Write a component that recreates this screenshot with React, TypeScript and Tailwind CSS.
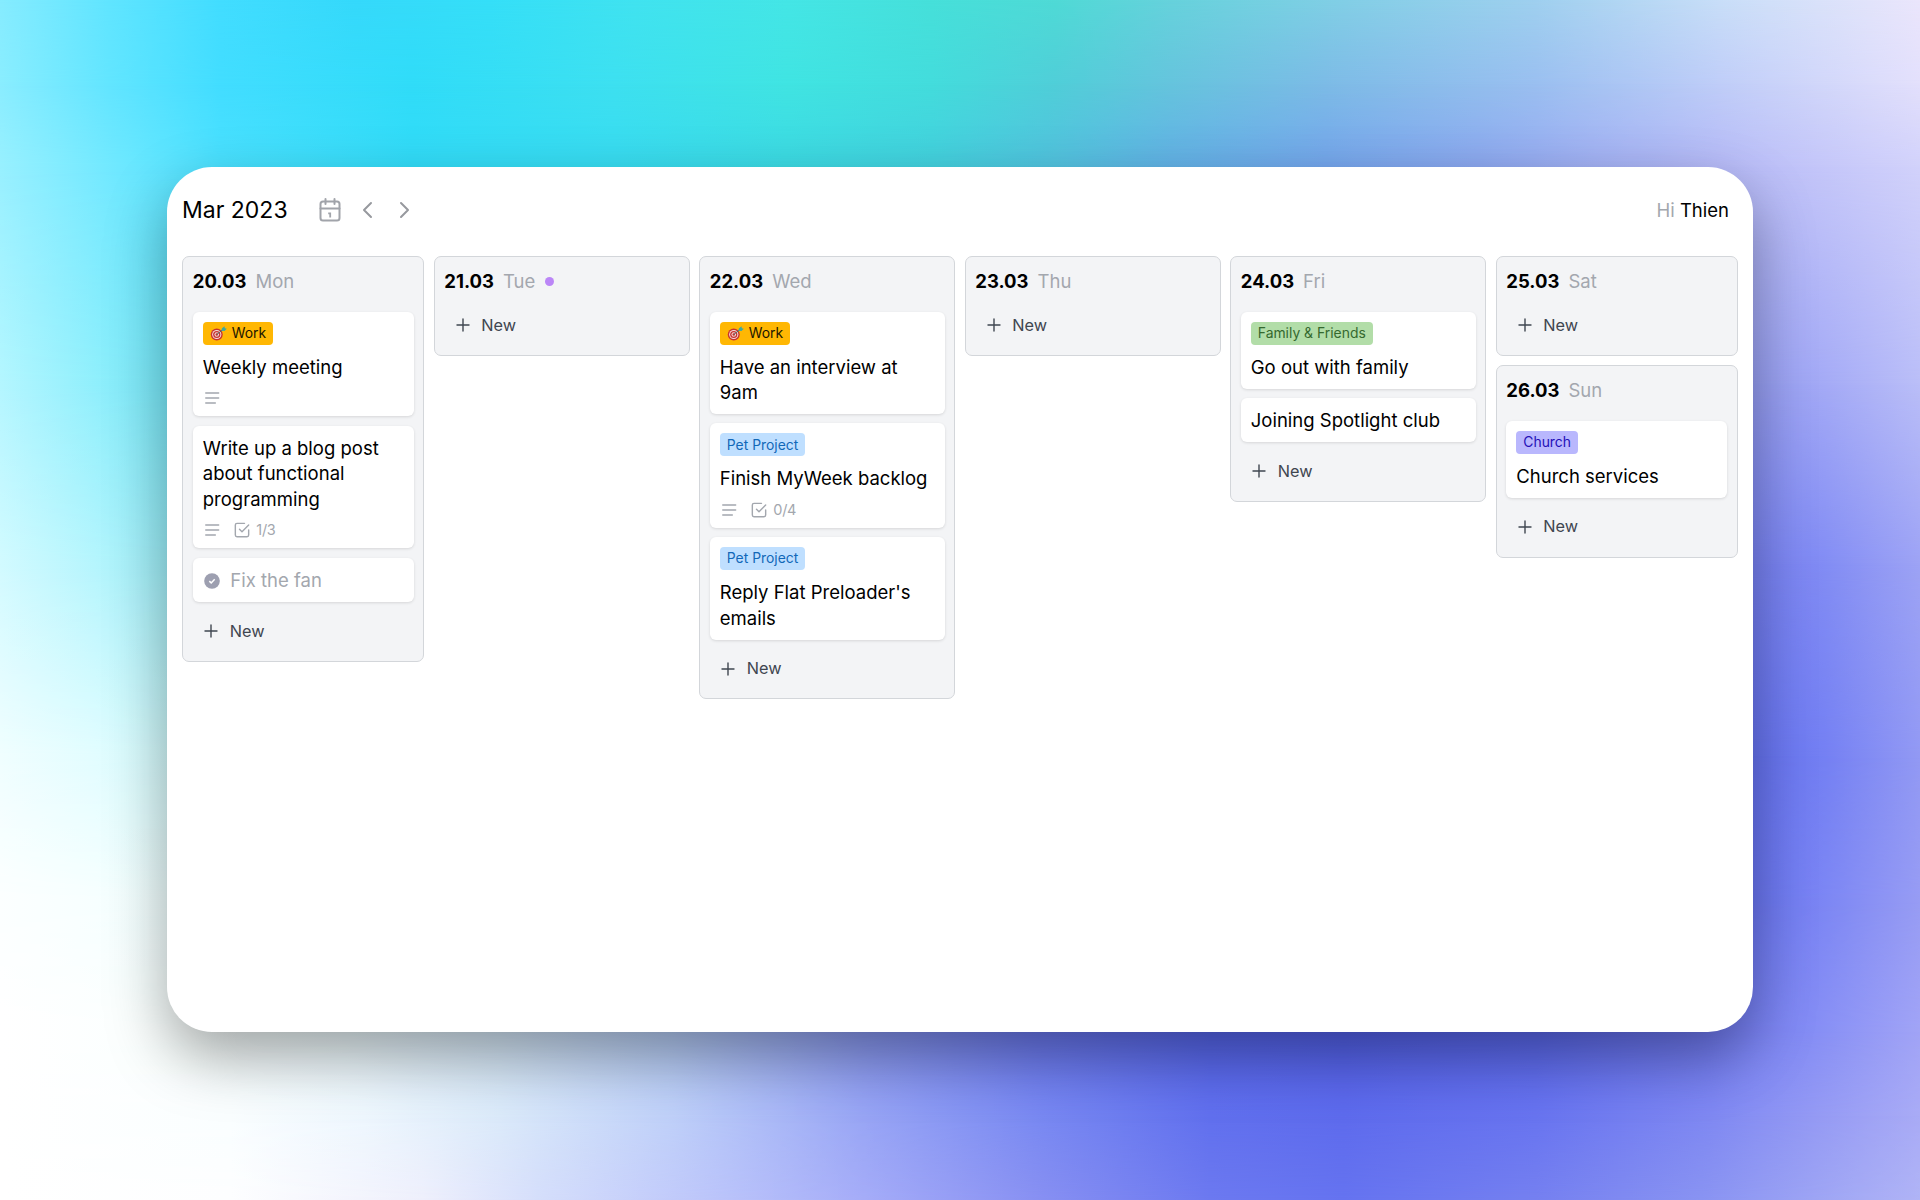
import type { ReactNode } from "react";

type Stop = [number, string];

/* Backdrop: horizontal gradients, each fading into the next from top to bottom. */
const bands: { y: number; stops: Stop[] }[] = [
  { y: 0, stops: [[0, "#86ecff"], [5.7, "#60e5ff"], [11.5, "#42ddff"], [18.5, "#35d9fb"], [25.5, "#35dff8"], [33, "#40e3f0"], [41, "#44e6e6"], [48.5, "#46e0da"], [55, "#4fdad6"], [61, "#66d2dc"], [70, "#82cfe6"], [80, "#9fd0ef"], [89.5, "#c8def8"], [100, "#ebe6fc"]] },
  { y: 7, stops: [[0, "#8aedff"], [5.7, "#62e5ff"], [11.5, "#42ddff"], [21.5, "#30dcf8"], [32, "#3de0f0"], [41, "#40e4e2"], [48.5, "#43dcdc"], [55, "#50ced8"], [61, "#65c4dd"], [69, "#7cbbe6"], [80, "#9abff0"], [89.5, "#bfcdf8"], [100, "#e3e0fc"]] },
  { y: 13.8, stops: [[0, "#98f0ff"], [11.5, "#4ae1ff"], [21.5, "#32dcf8"], [32, "#38dcf1"], [41, "#3cdae3"], [48.5, "#43d1de"], [55, "#52c2df"], [61, "#62b1e6"], [69, "#74a6ec"], [77, "#8ca8f0"], [83, "#a2b0f4"], [89.5, "#b6baf7"], [100, "#d2d2fb"]] },
  { y: 32, stops: [[0, "#b4f6ff"], [5, "#90effc"], [9, "#74e7f8"], [50, "#58aee8"], [91, "#959df3"], [95, "#a4aaf6"], [100, "#babef8"]] },
  { y: 47, stops: [[0, "#d2faff"], [5, "#b5f5fd"], [9, "#9ceef8"], [50, "#80a0f0"], [91, "#7680f2"], [95, "#828cf4"], [100, "#9da3f5"]] },
  { y: 63, stops: [[0, "#f0feff"], [5, "#e2fdff"], [9, "#d2fafc"], [50, "#8090f0"], [91, "#6471f0"], [95, "#7480f3"], [100, "#9299f4"]] },
  { y: 75, stops: [[0, "#fcffff"], [5, "#f7ffff"], [9, "#effefe"], [50, "#8090f0"], [91, "#6874f1"], [95, "#7c86f4"], [100, "#979cf4"]] },
  { y: 86, stops: [[0, "#ffffff"], [10, "#fafffe"], [18, "#edf9fc"], [26, "#d5e8f8"], [35, "#b4ccf6"], [45, "#8898f2"], [54, "#6a78f0"], [63, "#5666ee"], [70, "#5361ec"], [80, "#5a68ee"], [89, "#707af2"], [94.5, "#868ef5"], [100, "#a1a4f6"]] },
  { y: 93, stops: [[0, "#ffffff"], [12, "#fafeff"], [19, "#eef7fe"], [26, "#dbeafa"], [35, "#bfd0f9"], [45, "#98a5f5"], [54, "#7989f2"], [63, "#6170ee"], [70, "#5e6bed"], [80, "#6874f0"], [89, "#7f88f2"], [100, "#a9abf6"]] },
  { y: 100, stops: [[0, "#ffffff"], [12, "#fdfeff"], [22, "#eeeffc"], [28, "#d5defb"], [38, "#b9c2fa"], [45, "#a5acf8"], [54, "#8890f2"], [63, "#6c79f0"], [70, "#6573f0"], [80, "#7580f0"], [89, "#8a94f2"], [100, "#b0b4f6"]] },
];

function Backdrop() {
  return (
    <>
      {bands.map((b, i) => {
        const fade = i === 0 ? undefined : `linear-gradient(to bottom, transparent ${bands[i - 1].y}%, black ${b.y}%)`;
        return (
          <div
            key={b.y}
            className="col-start-1 row-start-1"
            style={{
              backgroundImage: `linear-gradient(to right, ${b.stops.map(([x, c]) => `${c} ${x}%`).join(", ")})`,
              maskImage: fade,
            }}
          />
        );
      })}
    </>
  );
}

function Dart() {
  return (
    <svg viewBox="0 0 34 30" className="h-[15px] w-[17px]">
      <circle cx="13.500" cy="17" r="12" fill="#c9322f" />
      <circle cx="13.500" cy="17" r="9.200" fill="#f3dcda" />
      <circle cx="13.500" cy="17" r="7.200" fill="#c9322f" />
      <circle cx="13.500" cy="17" r="4.600" fill="#f3dcda" />
      <circle cx="13.500" cy="17" r="2.500" fill="#c9322f" />
      <path d="M13.500 17 26 7" stroke="#4f6b6b" strokeWidth="2" />
      <path d="M22.500 9.500 24 4.500l5-4 .6 4 4 .8-4.600 4.700Z" fill="#3fa7a0" />
    </svg>
  );
}

function Lines() {
  return (
    <svg viewBox="0 0 24 24" fill="none" stroke="currentColor" strokeWidth="1.700" strokeLinecap="round" className="size-5">
      <path d="M4.500 6h15.500M4.500 12h15.500M4.500 18h11.500" />
    </svg>
  );
}

function Checkbox() {
  return (
    <svg viewBox="0 0 24 24" fill="none" stroke="currentColor" strokeWidth="1.700" strokeLinecap="round" strokeLinejoin="round" className="size-5">
      <path d="m9 11 3 3 8-8" />
      <path d="M20 12v6a2 2 0 0 1-2 2H6a2 2 0 0 1-2-2V6a2 2 0 0 1 2-2h9" />
    </svg>
  );
}

function Done() {
  return (
    <svg viewBox="0 0 16 16" className="size-[16px]">
      <circle cx="8" cy="8" r="7.800" fill="#9d9fb0" />
      <path d="m5.300 8.100 1.900 1.800 3.500-3.600" fill="none" stroke="#fff" strokeWidth="1.500" />
    </svg>
  );
}

const tags = {
  work: "bg-[#ffb703] text-[#1c1500]",
  pet: "bg-[#bfdfff] text-[#1268b8]",
  family: "bg-[#b2dda8] text-[#35692f]",
  church: "bg-[#b9b7fd] text-[#2410b8]",
};

function Tag({ kind, children }: { kind: keyof typeof tags; children: ReactNode }) {
  return (
    <div className={`mb-[10px] flex h-[23px] w-fit items-center rounded-[4px] px-[7px] text-[13.900px] leading-none ${tags[kind]}`}>
      {kind === "work" && <span className="mr-[5px]"><Dart /></span>}
      <span className="pt-px">{children}</span>
    </div>
  );
}

function Card({ children, className = "" }: { children: ReactNode; className?: string }) {
  return (
    <div className={`rounded-[6px] bg-white pt-[10px] pr-[8px] pl-[10px] text-[18.500px] leading-[25.600px] text-black shadow-[0_1px_3px_rgba(0,0,0,0.12)] ${className}`}>
      {children}
    </div>
  );
}

function Meta({ count }: { count?: string }) {
  return (
    <div className="mt-[5px] -ml-[0.500px] flex h-[25px] items-center text-[#a3a7ae]">
      <Lines />
      {count && (
        <>
          <span className="ml-[10px]"><Checkbox /></span>
          <span className="ml-[4px] text-[14.500px] tracking-[-0.300px]">{count}</span>
        </>
      )}
    </div>
  );
}

function Day({ date, name, dot, height, children }: { date: string; name: string; dot?: boolean; height: string; children?: ReactNode }) {
  return (
    <section className={`flex flex-col rounded-[7px] border border-[#d3d6da] bg-[#f3f4f6] px-[9.600px] ${height}`}>
      <h2 className="mt-[11.700px] flex h-[26px] items-center text-[18.500px]">
        <span className="font-bold text-black">{date}</span>
        <span className="ml-[9px] text-[#a3a7ae]">{name}</span>
        {dot && <span className="ml-[9.500px] size-[9px] rounded-full bg-[#bb86f7]" />}
      </h2>
      {children && <div className="mt-[17px] flex flex-col gap-[9.300px]">{children}</div>}
      <button className={`flex h-[26px] items-center pl-[11.500px] text-[16.300px] text-[#3f4650] ${children ? "mt-[16px]" : "mt-[17.300px]"}`}>
        <svg viewBox="0 0 14 14" className="size-[14px]" stroke="currentColor" strokeWidth="1.400" strokeLinecap="round">
          <path d="M1 7h12M7 1v12" />
        </svg>
        <span className="ml-[11.500px]">New</span>
      </button>
    </section>
  );
}

export default function App() {
  return (
    <div className="grid h-[1200px] w-[1920px] overflow-hidden font-['Inter',sans-serif]">
      <Backdrop />
      <main className="z-10 col-start-1 row-start-1 mx-[167px] mt-[167px] flex h-[864.500px] flex-col rounded-[45px] bg-white shadow-[0_25px_60px_rgba(0,0,0,0.35)]">
        <header className="mt-[26px] flex h-[34px] items-center pr-[24px] pl-[15px]">
          <h1 className="w-[133px] text-[23px] text-black">Mar 2023</h1>
          <svg viewBox="0 0 22 24" className="mr-[19.500px] ml-[4px] h-6 w-[22px]" fill="none" stroke="#a1a4aa" strokeWidth="2">
            <rect x="1.500" y="3.500" width="19" height="19" rx="2.500" />
            <path d="M1.500 10.500h19M6.500 1v5M15.500 1v5" strokeLinecap="round" />
            <path d="M9.200 15.300h2v4.200" strokeWidth="1.800" />
          </svg>
          <svg viewBox="0 0 12 18" className="h-[18px] w-3" fill="none" stroke="#97999e" strokeWidth="2" strokeLinecap="round" strokeLinejoin="round">
            <path d="M10 2 3 9l7 7" />
          </svg>
          <svg viewBox="0 0 12 18" className="ml-[26px] h-[18px] w-3" fill="none" stroke="#97999e" strokeWidth="2" strokeLinecap="round" strokeLinejoin="round">
            <path d="m2 2 7 7-7 7" />
          </svg>
          <p className="ml-auto pt-[2px] text-[18.500px] text-black">
            <span className="text-[#a3a7ae]">Hi</span> Thien
          </p>
        </header>

        <div className="mt-[29.200px] grid grid-cols-[242px_256px_256px_256px_256px_242px] items-start gap-[9.500px] px-[15.200px]">
          <Day date="20.03" name="Mon" height="h-[405.500px]">
            <Card className="h-[104.500px]">
              <Tag kind="work">Work</Tag>
              Weekly meeting
              <Meta />
            </Card>
            <Card className="h-[122.800px]">
              Write up a blog post about functional programming
              <Meta count="1/3" />
            </Card>
            <Card className="h-[44.300px]">
              <div className="flex items-center pl-[1px] text-[#a3a7ae]">
                <Done />
                <span className="ml-[10.500px]">Fix the fan</span>
              </div>
            </Card>
          </Day>
          <Day date="21.03" name="Tue" dot height="h-[99.500px]" />
          <Day date="22.03" name="Wed" height="h-[442.500px]">
            <Card className="h-[102.300px]">
              <Tag kind="work">Work</Tag>
              Have an interview at 9am
            </Card>
            <Card className="h-[104.500px]">
              <Tag kind="pet">Pet Project</Tag>
              Finish MyWeek backlog
              <Meta count="0/4" />
            </Card>
            <Card className="h-[102.300px]">
              <Tag kind="pet">Pet Project</Tag>
              Reply Flat Preloader's emails
            </Card>
          </Day>
          <Day date="23.03" name="Thu" height="h-[99.500px]" />
          <Day date="24.03" name="Fri" height="h-[245.500px]">
            <Card className="h-[76.800px]">
              <Tag kind="family">Family &amp; Friends</Tag>
              Go out with family
            </Card>
            <Card className="h-[44.300px]">Joining Spotlight club</Card>
          </Day>
          <div className="flex flex-col gap-[9.500px]">
            <Day date="25.03" name="Sat" height="h-[99.500px]" />
            <Day date="26.03" name="Sun" height="h-[192.500px]">
              <Card className="h-[76.800px]">
                <Tag kind="church">Church</Tag>
                Church services
              </Card>
            </Day>
          </div>
        </div>
      </main>
    </div>
  );
}
